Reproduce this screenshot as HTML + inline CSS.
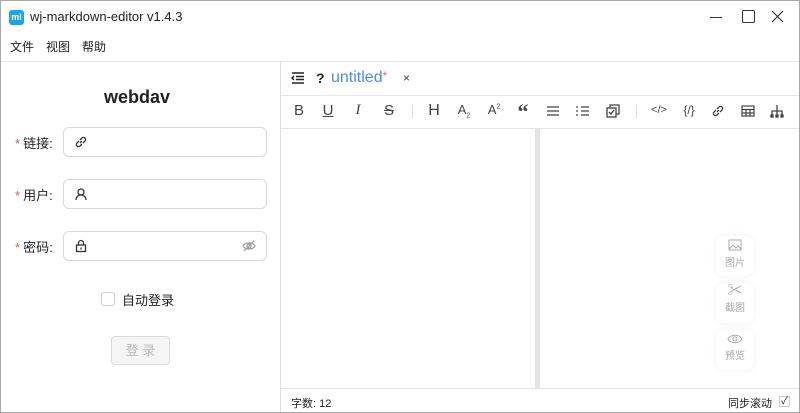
<!DOCTYPE html>
<html><head><meta charset="utf-8"><style>
*{margin:0;padding:0;box-sizing:border-box}
body{width:800px;height:413px;overflow:hidden;background:#fff;font-family:"Liberation Sans","Noto Sans CJK SC",sans-serif;color:#222;position:relative}
.abs{position:absolute}
.frame{position:absolute;left:0;top:0;width:800px;height:413px;border:1px solid #a8a8a8;pointer-events:none}
.menu span{margin-right:12px;font-size:12px}
.inp{position:absolute;left:63px;width:204px;height:30px;border:1px solid #d9d9d9;border-radius:6px}
.lbl{position:absolute;left:15px;font-size:13px}
.lbl b{color:#e54;font-weight:normal;margin-right:3px}
.tb{position:absolute;top:102px;font-size:15px;color:#444;width:20px;text-align:center}
.fl{position:absolute;left:716px;width:38px;height:40px;border-radius:8px;box-shadow:0 0 8px rgba(0,0,0,.05);text-align:center;color:#aaa;font-size:10px}
</style></head><body>
<div class="abs" style="left:9px;top:10px;width:15px;height:15px;background:#1aa3f0;border-radius:3px;color:#fff;font-size:9px;font-weight:bold;text-align:center;line-height:14px">ml</div>
<div class="abs" style="left:30px;top:9px;font-size:13px">wj-markdown-editor v1.4.3</div>
<div class="abs" style="left:710px;top:17px;width:12px;height:1px;background:#333"></div>
<div class="abs" style="left:742px;top:10px;width:13px;height:13px;border:1.3px solid #333;border-radius:2px"></div>
<svg class="abs" style="left:771px;top:10px" width="13" height="13" stroke="#333" stroke-width="1.2"><path d="M1 1l11 11M12 1L1 12"/></svg>
<div class="abs menu" style="left:10px;top:38px"><span>文件</span><span>视图</span><span>帮助</span></div>
<div class="abs" style="left:0;top:61px;width:800px;height:1px;background:#e6e6e6"></div>
<div class="abs" style="left:280px;top:61px;width:1px;height:352px;background:#e0e0e0"></div>
<div class="abs" style="left:104px;top:87px;font-size:18px;font-weight:bold">webdav</div>
<div class="lbl" style="top:133px"><b>*</b>链接:</div>
<div class="inp" style="top:127px"><svg class="abs" style="left:10px;top:7px" width="14" height="14" viewBox="0 0 14 14" fill="none" stroke="#333" stroke-width="1.3"><path d="M6 8l2-2M5 6L3 8a2 2 0 003 3l2-2M9 8l2-2a2 2 0 00-3-3L6 5"/></svg></div>
<div class="lbl" style="top:185px"><b>*</b>用户:</div>
<div class="inp" style="top:179px"><svg class="abs" style="left:10px;top:7px" width="14" height="14" viewBox="0 0 14 14" fill="none" stroke="#333" stroke-width="1.3"><circle cx="7" cy="5" r="3"/><path d="M2 13c0-3 2-5 5-5s5 2 5 5"/></svg></div>
<div class="lbl" style="top:237px"><b>*</b>密码:</div>
<div class="inp" style="top:231px"><svg class="abs" style="left:10px;top:7px" width="14" height="14" viewBox="0 0 14 14" fill="none" stroke="#333" stroke-width="1.3"><rect x="2.5" y="6" width="9" height="6.5"/><path d="M4.5 6V4a2.5 2.5 0 015 0v2M7 8.5v2"/></svg><svg class="abs" style="left:178px;top:7px" width="14" height="14" viewBox="0 0 14 14" fill="none" stroke="#999" stroke-width="1.2"><path d="M1 7c2-4 10-4 12 0-2 4-10 4-12 0z"/><circle cx="7" cy="7" r="2"/><path d="M2 12L12 2"/></svg></div>
<div class="abs" style="left:101px;top:292px;width:14px;height:14px;border:1px solid #ccc;border-radius:3px"></div>
<div class="abs" style="left:122px;top:290px;font-size:13px">自动登录</div>
<div class="abs" style="left:111px;top:336px;width:59px;height:29px;border:1px solid #d9d9d9;background:#f5f5f5;border-radius:4px;color:#bbb;font-size:13px;text-align:center;line-height:27px">登 录</div>
<svg class="abs" style="left:291px;top:72px" width="14" height="12" viewBox="0 0 14 12" fill="none" stroke="#222" stroke-width="1.5"><path d="M1 1h12M5 4.5h8M5 7.5h8M1 11h12M3 4L1 6l2 2"/></svg>
<div class="abs" style="left:316px;top:70px;font-size:14px;font-weight:bold">?</div>
<div class="abs" style="left:331px;top:69px;font-size:16px;color:#4a90e2">untitled<span style="color:#e66;font-size:12px;vertical-align:top">*</span></div>
<div class="abs" style="left:403px;top:71px;font-size:12px;color:#444">×</div>
<div class="abs" style="left:281px;top:95px;width:519px;height:1px;background:#e6e6e6"></div>
<div class="tb" style="left:289px">B</div>
<div class="tb" style="left:318px;text-decoration:underline">U</div>
<div class="tb" style="left:348px;font-style:italic;font-family:'Liberation Serif',serif">I</div>
<div class="tb" style="left:379px;text-decoration:line-through">S</div>
<div class="abs" style="left:412px;top:104px;width:1px;height:14px;background:#ddd"></div>
<div class="tb" style="left:424px;font-size:16px">H</div>
<div class="tb" style="left:454px;font-size:13px">A<sub style="font-size:7px">2</sub></div>
<div class="tb" style="left:484px;font-size:13px">A<sup style="font-size:7px">2</sup></div>
<div class="tb" style="left:513px;font-weight:bold;font-size:22px;font-family:'Liberation Serif',serif;top:99px">&#8220;</div>
<svg class="abs" style="left:546px;top:105px" width="14" height="12" fill="none" stroke="#444" stroke-width="1.2"><path d="M1 2h12M1 6h12M1 10h12"/></svg>
<svg class="abs" style="left:576px;top:105px" width="14" height="12" fill="none" stroke="#444" stroke-width="1.2"><path d="M5 2h8M5 6h8M5 10h8M1 1v2M1 5v2M1 9v2"/></svg>
<svg class="abs" style="left:606px;top:104px" width="14" height="14" fill="none" stroke="#444" stroke-width="1.3"><rect x="1" y="4" width="9" height="9"/><path d="M4 4V1h9v9h-3M3 8l2 2 3-4"/></svg>
<div class="abs" style="left:636px;top:104px;width:1px;height:14px;background:#ddd"></div>
<div class="tb" style="left:649px;font-size:11px;top:104px">&lt;/&gt;</div>
<div class="tb" style="left:679px;font-size:12px;top:103px">{/}</div>
<svg class="abs" style="left:711px;top:104px" width="14" height="14" fill="none" stroke="#444" stroke-width="1.3"><path d="M6 8l2-2M5 6L3 8a2 2 0 003 3l2-2M9 8l2-2a2 2 0 00-3-3L6 5"/></svg>
<svg class="abs" style="left:741px;top:105px" width="14" height="12" fill="none" stroke="#444" stroke-width="1.2"><rect x="1" y="1" width="12" height="10"/><path d="M1 4.5h12M1 8h12M5 4.5V11M9 4.5V11"/></svg>
<svg class="abs" style="left:770px;top:104px" width="14" height="14" fill="none" stroke="#444" stroke-width="1.3"><path d="M7 1v5M2 12V7h10v5M7 6v6"/><rect x="1" y="11" width="2" height="2" fill="#444"/><rect x="6" y="11" width="2" height="2" fill="#444"/><rect x="11" y="11" width="2" height="2" fill="#444"/></svg>
<div class="abs" style="left:281px;top:128px;width:519px;height:1px;background:#e6e6e6"></div>
<div class="abs" style="left:535px;top:129px;width:5px;height:260px;background:#e4e4e4"></div>
<div class="fl" style="top:236px"><svg style="margin-top:3px" width="14" height="12" fill="none" stroke="#aaa"><rect x="1" y="1" width="12" height="10"/><path d="M1 10l4-4 3 3 2-2 3 3"/></svg><div>图片</div></div>
<div class="fl" style="top:283px"><div style="font-size:15px;line-height:16px">✂</div><div>截图</div></div>
<div class="fl" style="top:330px"><svg style="margin-top:4px" width="16" height="10" fill="none" stroke="#aaa"><path d="M1 5c3-5 11-5 14 0-3 5-11 5-14 0z"/><circle cx="8" cy="5" r="2"/></svg><div>预览</div></div>
<div class="abs" style="left:281px;top:388px;width:519px;height:1px;background:#e6e6e6"></div>
<div class="abs" style="left:291px;top:395px;font-size:11px">字数: 12</div>
<div class="abs" style="left:728px;top:395px;font-size:11px">同步滚动</div>
<div class="abs" style="left:779px;top:396px;width:11px;height:11px;border:1px solid #ccc;font-size:10px;line-height:9px;text-align:center">✓</div>
<div class="frame"></div>
</body></html>
